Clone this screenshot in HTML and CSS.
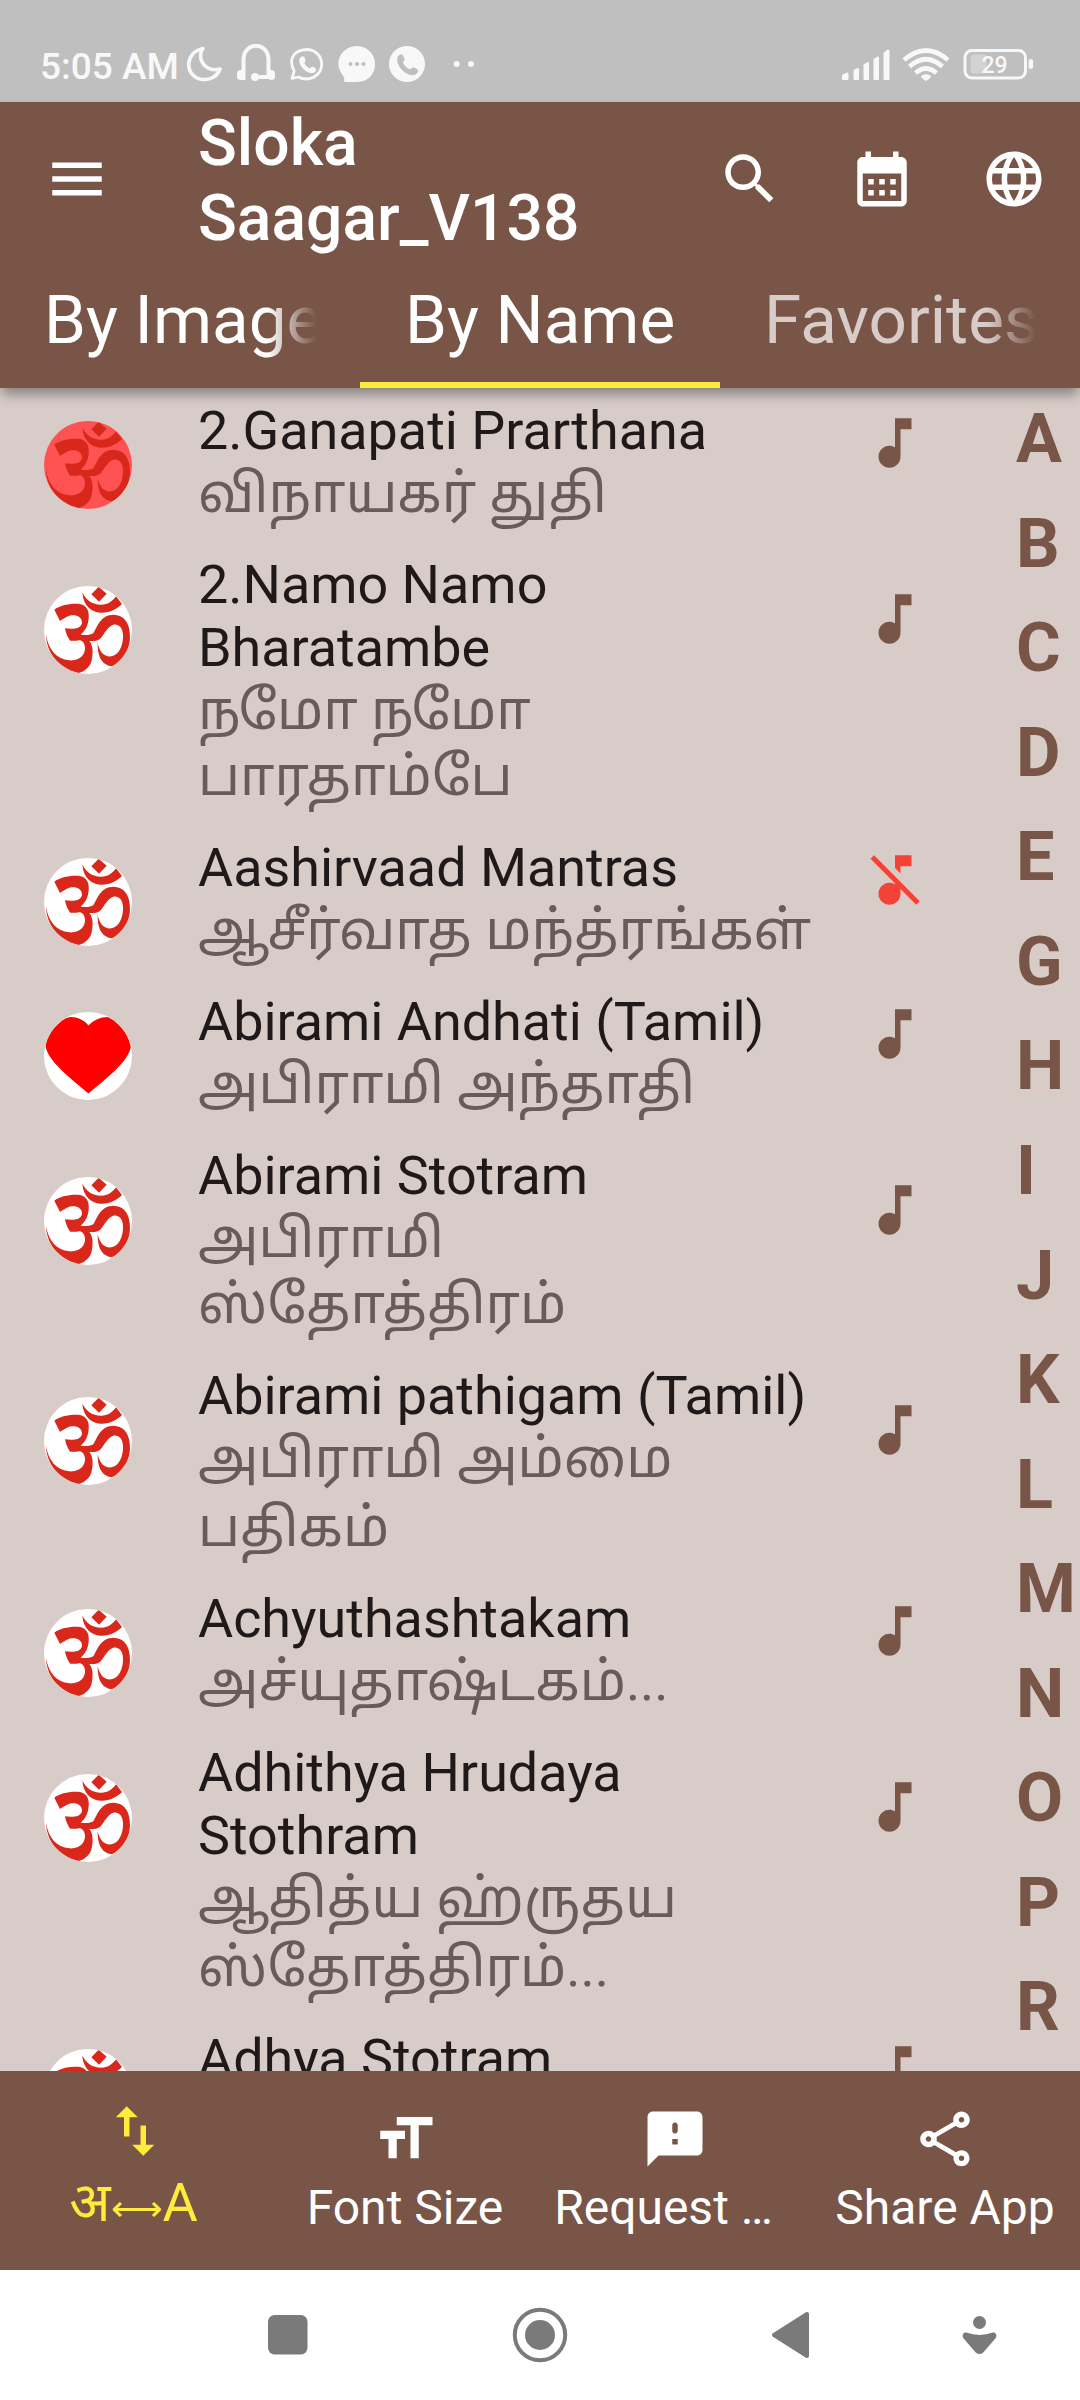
FILE: index.html
```html
<!DOCTYPE html>
<html lang="en">
<head>
<meta charset="utf-8">
<title>Sloka Saagar</title>
<link rel="stylesheet" href="styles.css">
</head>
<body>
<svg class="defs" width="0" height="0" aria-hidden="true">
  <defs>
    <clipPath id="round"><circle cx="44" cy="44" r="44"/></clipPath>
    <symbol id="om" viewBox="42 48 264 264">
      <path d="M206 50L230 71L207 95L184 73Z"/>
      <path d="M157 68C160 108 186 128 215 128C242 128 262 116 276 102L258 79C246 96 230 105 212 104C188 103 170 92 157 68Z"/>
      <path d="M73 119C90 106 120 99 150 102C172 107 178 125 176 145C174 168 166 182 152 194C168 196 180 196 190 190C204 164 214 135 250 134C290 135 301 170 300 205C298 245 275 278 246 289C222 287 202 268 203 220C210 250 225 262 245 259C268 254 280 225 279 195C278 170 262 160 248 165C232 172 224 190 212 205C206 213 190 214 178 213C190 226 190 252 184 275C178 293 160 306 145 309C100 302 50 260 48 195C56 240 80 268 118 271C150 273 166 255 165 232C163 215 152 208 142 212L120 212C112 200 107 188 105 175C125 178 153 178 156 158C156 140 138 132 118 137C108 141 98 147 90 153Z"/>
    </symbol>
    <symbol id="note" viewBox="0 0 24 24"><path d="M12 3v10.55c-.59-.34-1.27-.55-2-.55-2.21 0-4 1.79-4 4s1.79 4 4 4 4-1.79 4-4V7h4V3h-6z"/></symbol>
  </defs>
</svg>
<div class="screen">
  <div class="status">
    <span class="clock">5:05 AM</span>
    <svg class="notif" width="300" height="40" viewBox="182 44 300 40">
      <g fill="none" stroke="#f8f8f8" stroke-width="3.600" stroke-linejoin="round">
        <path d="M203 48.500C185 52 184 75 200 79C209 81 217 77 220 69C210 72 203 66 201 59C200 55 201 51 203 48.500Z"/>
        <path d="M243.500 80V60C243.500 41 268.500 41 268.500 60V77H256" stroke-width="4"/>
        <path d="M292 78.500L294.200 71C287 57 296 49.500 307.500 49.500C326 51 327 77 307 79C303 79 300 78 298.500 77Z" stroke-width="2.800"/>
      </g>
      <g fill="#f8f8f8">
        <rect x="237" y="70" width="7" height="10" rx="3.500"/><rect x="268" y="70" width="7" height="10" rx="3.500"/><circle cx="255" cy="77" r="4"/>
        <path d="M301 57c2-1.500 3.500-.5 4.500 3c.4 1.600-1.500 2-1 3.200c1.200 2.600 2.800 4 5 5c1 .4 1.800-2 3.200-1.500c3.600 1.300 4 2.300 3 4.200c-1.800 3-5.600 2.500-9 .6c-3.600-2-6.600-6-7.400-9.500c-.3-2 .2-3.900 1.700-5z"/>
        <path d="M343.500 82C345 82 344.500 78 343 75.500C332 61 343 46 357 46C381 47 381 82 357 82Z"/>
        <circle cx="407" cy="64" r="18"/>
        <circle cx="456.600" cy="64" r="3"/><circle cx="471" cy="64" r="3"/>
      </g>
      <g fill="#bfbfbf"><circle cx="350.500" cy="64" r="2"/><circle cx="357" cy="64" r="2"/><circle cx="363.500" cy="64" r="2"/>
        <path d="M399 55c2.500-2 4.500-.3 5.500 4c.5 2-2 2.400-1.200 4c1.500 3.200 3.600 5.200 6.400 6.200c1.400.5 2.300-2.400 4-1.800c4.600 1.700 5 3 3.800 5.200c-2.200 3.600-7 3-11.200.6c-4.500-2.500-8.200-7.400-9-11.700c-.4-2.500.2-5 1.700-6.500z"/></g>
    </svg>
    <svg class="sys" width="200" height="40" viewBox="838 44 200 40">
      <g fill="#f8f8f8">
        <path d="M842 76q0-2 3-2.500l1.500-.8q2-.6 2 1.300v5q0 1-1 1h-4.500q-1 0-1-1zM853.500 70l4-2q1.500-.4 1.500 1v10q0 1-1 1h-3.500q-1 0-1-1zM863.500 64.500l4-2.500q1.500-.4 1.500 1v16q0 1-1 1h-3.500q-1 0-1-1zM873.500 59l4-2.500q1.500-.4 1.500 1v21.500q0 1-1 1h-3.500q-1 0-1-1zM883.500 53l4-3.500q2-.4 2 1.500v28q0 1-1 1h-4q-1 0-1-1z"/>
        <path d="M921 76q5-3.500 10 0q.5 1.500-5 5q-5-3-5-5z"/>
        <rect x="1028.600" y="59" width="4.500" height="10" rx="2"/>
        <rect x="970.500" y="54.500" width="16" height="19" rx="3" opacity=".35"/>
      </g>
      <g fill="none" stroke="#f8f8f8" stroke-width="4.600">
        <path d="M904 60Q926 41 948 60"/><path d="M909.500 66.500Q926 52 942.500 66.500"/><path d="M915.500 73Q926 64 936.500 73"/>
        <rect x="965" y="50.500" width="60.500" height="27.500" rx="7" stroke-width="3"/>
      </g>
      <text class="batt" x="994.500" y="73" text-anchor="middle">29</text>
    </svg>
  </div>

  <header class="appbar">
    <div class="toolbar">
      <svg class="icon menu" viewBox="0 0 24 24"><path d="M3 18h18v-2H3v2zm0-5h18v-2H3v2zm0-7v2h18V6H3z"/></svg>
      <h1 class="title">Sloka<br>Saagar_V138</h1>
      <div class="actions">
        <svg class="icon" viewBox="0 0 24 24"><path d="M15.500 14h-.79l-.28-.27C15.410 12.590 16 11.110 16 9.500 16 5.910 13.090 3 9.500 3S3 5.910 3 9.500 5.910 16 9.500 16c1.610 0 3.090-.59 4.230-1.570l.27.28v.79l5 4.990L20.490 19l-4.990-5zm-6 0C7.010 14 5 11.990 5 9.500S7.010 5 9.500 5 14 7.010 14 9.500 11.990 14 9.500 14z"/></svg>
        <svg class="icon" viewBox="0 0 24 24"><path d="M19 4h-1V2h-2v2H8V2H6v2H5c-1.110 0-1.990.9-1.990 2L3 20c0 1.100.89 2 2 2h14c1.100 0 2-.9 2-2V6c0-1.100-.9-2-2-2zm0 16H5V10h14v10zM9 14H7v-2h2v2zm4 0h-2v-2h2v2zm4 0h-2v-2h2v2zm-8 4H7v-2h2v2zm4 0h-2v-2h2v2zm4 0h-2v-2h2v2z"/></svg>
        <svg class="icon" viewBox="0 0 24 24"><path d="M11.990 2C6.470 2 2 6.480 2 12s4.470 10 9.990 10C17.520 22 22 17.520 22 12S17.520 2 11.990 2zm6.930 6h-2.950c-.32-1.250-.78-2.450-1.380-3.560 1.840.63 3.370 1.910 4.330 3.560zM12 4.040c.83 1.200 1.480 2.530 1.910 3.960h-3.820c.43-1.430 1.080-2.760 1.910-3.960zM4.260 14C4.100 13.360 4 12.690 4 12s.1-1.360.26-2h3.380c-.08.66-.14 1.320-.14 2 0 .68.06 1.340.14 2H4.260zm.82 2h2.950c.32 1.250.78 2.450 1.380 3.560-1.840-.63-3.370-1.900-4.330-3.560zm2.950-8H5.080c.96-1.660 2.490-2.930 4.330-3.560C8.810 5.550 8.350 6.750 8.030 8zM12 19.960c-.83-1.200-1.480-2.530-1.910-3.960h3.820c-.43 1.430-1.080 2.760-1.910 3.960zM14.340 14H9.660c-.09-.66-.16-1.320-.16-2 0-.68.07-1.350.16-2h4.680c.09.65.16 1.320.16 2 0 .68-.07 1.340-.16 2zm.25 5.560c.6-1.110 1.060-2.310 1.380-3.560h2.950c-.96 1.650-2.490 2.930-4.330 3.560zM16.360 14c.08-.66.14-1.320.14-2 0-.68-.06-1.340-.14-2h3.380c.16.64.26 1.310.26 2s-.1 1.360-.26 2h-3.380z"/></svg>
      </div>
    </div>
    <nav class="tabs">
      <div class="tab"><span class="fade">By Images</span></div>
      <div class="tab active"><span>By Name</span></div>
      <div class="tab dim"><span class="fade">Favorites</span></div>
    </nav>
  </header>

  <main class="body">
    <div class="list">
      <div class="row">
        <svg class="avatar hot" viewBox="0 0 88 88"><use href="#om" width="88" height="88"/></svg>
        <div class="text"><p class="en">2.Ganapati Prarthana</p><p class="ta">விநாயகர் துதி</p></div>
        <svg class="note" viewBox="0 0 24 24"><use href="#note"/></svg>
      </div>
      <div class="row tall">
        <svg class="avatar" viewBox="0 0 88 88"><use href="#om" width="88" height="88"/></svg>
        <div class="text"><p class="en">2.Namo Namo<br>Bharatambe</p><p class="ta">நமோ நமோ<br>பாரதாம்பே</p></div>
        <svg class="note" viewBox="0 0 24 24"><use href="#note"/></svg>
      </div>
      <div class="row">
        <svg class="avatar" viewBox="0 0 88 88"><use href="#om" width="88" height="88"/></svg>
        <div class="text"><p class="en">Aashirvaad Mantras</p><p class="ta">ஆசீர்வாத மந்த்ரங்கள்</p></div>
        <svg class="note off" viewBox="0 0 24 24"><path d="M12 3h6v4h-4v2.600l-2-2z M10 13c-2.210 0-4 1.790-4 4s1.790 4 4 4 4-1.790 4-4v-2.800l-1.200-1.200-.8.550c-.59-.34-1.270-.55-2-.55z"/><path d="M4.400 3L3.100 4.300L19.700 21L21 19.700Z"/></svg>
      </div>
      <div class="row">
        <svg class="avatar" viewBox="0 0 88 88"><path clip-path="url(#round)" fill="#f00" d="M44.500 13.500C50 8 56 5 64 5C78 10 87 22 87 34C85 50 60 68 44.500 81.500C29 68 4 50 1.500 34C2 22 12 8 26 5C34 5 40 8 44.500 13.500Z"/></svg>
        <div class="text"><p class="en">Abirami Andhati (Tamil)</p><p class="ta">அபிராமி அந்தாதி</p></div>
        <svg class="note" viewBox="0 0 24 24"><use href="#note"/></svg>
      </div>
      <div class="row tall">
        <svg class="avatar" viewBox="0 0 88 88"><use href="#om" width="88" height="88"/></svg>
        <div class="text"><p class="en">Abirami Stotram</p><p class="ta">அபிராமி<br>ஸ்தோத்திரம்</p></div>
        <svg class="note" viewBox="0 0 24 24"><use href="#note"/></svg>
      </div>
      <div class="row tall">
        <svg class="avatar" viewBox="0 0 88 88"><use href="#om" width="88" height="88"/></svg>
        <div class="text"><p class="en">Abirami pathigam (Tamil)</p><p class="ta loose">அபிராமி அம்மை<br>பதிகம்</p></div>
        <svg class="note" viewBox="0 0 24 24"><use href="#note"/></svg>
      </div>
      <div class="row">
        <svg class="avatar" viewBox="0 0 88 88"><use href="#om" width="88" height="88"/></svg>
        <div class="text"><p class="en">Achyuthashtakam</p><p class="ta">அச்யுதாஷ்டகம்...</p></div>
        <svg class="note" viewBox="0 0 24 24"><use href="#note"/></svg>
      </div>
      <div class="row tall">
        <svg class="avatar" viewBox="0 0 88 88"><use href="#om" width="88" height="88"/></svg>
        <div class="text"><p class="en">Adhithya Hrudaya<br>Stothram</p><p class="ta loose">ஆதித்ய ஹ்ருதய<br>ஸ்தோத்திரம்...</p></div>
        <svg class="note" viewBox="0 0 24 24"><use href="#note"/></svg>
      </div>
      <div class="row">
        <svg class="avatar" viewBox="0 0 88 88"><use href="#om" width="88" height="88"/></svg>
        <div class="text"><p class="en">Adhya Stotram</p></div>
        <svg class="note" viewBox="0 0 24 24"><use href="#note"/></svg>
      </div>
    </div>
    <div class="index">
      <span>A</span><span>B</span><span>C</span><span>D</span><span>E</span><span>G</span><span>H</span><span>I</span><span>J</span><span>K</span><span>L</span><span>M</span><span>N</span><span>O</span><span>P</span><span>R</span>
    </div>
  </main>

  <nav class="bottom">
    <div class="item selected"><svg class="icon" viewBox="0 0 24 24"><path d="M9 3L5 6.990h3V14h2V6.990h3L9 3zm7 14.010V10h-2v7.010h-3L15 21l4-3.990h-3z"/></svg><span class="label">अ<span class="arrow">⟷</span>A</span></div>
    <div class="item"><svg class="icon" viewBox="0 0 24 24"><path d="M9 4v3h5v12h3V7h5V4H9zm-6 8h3v7h3v-7h3V9H3v3z"/></svg><span class="label">Font Size</span></div>
    <div class="item req"><svg class="icon" viewBox="0 0 24 24"><path d="M20 2H4c-1.100 0-1.990.9-1.990 2L2 22l4-4h14c1.100 0 2-.9 2-2V4c0-1.100-.9-2-2-2zm-7 12h-2v-2h2v2zm-1-4c-.55 0-1-.45-1-1V7c0-.55.45-1 1-1s1 .45 1 1v2c0 .55-.45 1-1 1z"/></svg><span class="label">Request …</span></div>
    <div class="item"><svg class="icon" viewBox="0 0 24 24"><path d="M18 16.080c-.76 0-1.440.3-1.960.77L8.910 12.700c.05-.23.09-.46.09-.7s-.04-.47-.09-.7l7.050-4.110c.54.5 1.250.81 2.040.81 1.660 0 3-1.340 3-3s-1.340-3-3-3-3 1.340-3 3c0 .24.04.47.09.7L8.040 9.810C7.500 9.310 6.790 9 6 9c-1.660 0-3 1.340-3 3s1.340 3 3 3c.79 0 1.500-.31 2.040-.81l7.120 4.160c-.05.21-.08.43-.08.65 0 1.610 1.310 2.920 2.920 2.920s2.920-1.310 2.920-2.920c0-1.610-1.310-2.920-2.920-2.920zM18 4c.55 0 1 .45 1 1s-.45 1-1 1-1-.45-1-1 .45-1 1-1zM6 13c-.55 0-1-.45-1-1s.45-1 1-1 1 .45 1 1-.45 1-1 1zm12 7.020c-.55 0-1-.45-1-1s.45-1 1-1 1 .45 1 1-.45 1-1 1z"/></svg><span class="label">Share App</span></div>
  </nav>

  <div class="sysnav">
    <svg width="1080" height="130" viewBox="0 2270 1080 130" fill="#7a7a7a">
      <rect x="268" y="2315" width="39.500" height="39.500" rx="6.500"/>
      <circle cx="540" cy="2335" r="25.200" fill="none" stroke="#7a7a7a" stroke-width="4"/><circle cx="540" cy="2335" r="15"/>
      <path d="M774 2335L807 2314V2356Z" stroke="#7a7a7a" stroke-width="4" stroke-linejoin="round"/>
      <circle cx="979.500" cy="2322.500" r="6.500"/>
      <path d="M965.500 2334.500Q979.500 2339.500 993.500 2334.500Q995 2335 994 2337L982 2351Q979.500 2353 977 2351L965 2337Q964 2335 965.500 2334.500Z" stroke="#7a7a7a" stroke-width="4" stroke-linejoin="round"/>
    </svg>
  </div>
</div>
</body>
</html>
```
FILE: styles.css
```css
* { box-sizing: border-box; margin: 0; padding: 0; }
body { width: 1080px; height: 2400px; overflow: hidden; background: #d7ccc8; font-family: Roboto, "Noto Sans Tamil", "Noto Sans", sans-serif; }
svg { display: block; flex: none; }
.defs { position: absolute; }
.screen { display: flex; flex-direction: column; width: 1080px; height: 2400px; }

.status { flex: none; height: 102px; display: flex; align-items: flex-start; padding: 44px 42px 0 40px; background: #bfbfbf; }
.clock { width: 142px; font-size: 37px; font-weight: 500; line-height: 45px; color: #f8f8f8; white-space: nowrap; }
.sys { margin-left: auto; }
.batt { font-size: 23px; font-weight: 500; fill: #f8f8f8; }

.appbar { flex: none; height: 286px; background: #795548; color: #fff; box-shadow: 0 8px 12px -2px rgba(0, 0, 0, .38); z-index: 1; }
.toolbar { height: 154px; display: flex; align-items: center; }
.icon { width: 66px; height: 66px; fill: currentColor; }
.menu { margin: 0 88px 0 44px; }
.title { flex: 1; font-size: 64.2px; font-weight: 500; line-height: 75px; padding-top: 4px; }
.actions { display: flex; gap: 66px; padding-right: 33px; }
.tabs { height: 132px; display: flex; }
.tab { width: 360px; padding: 24px 44px 0; border-bottom: 6px solid transparent; font-size: 67.4px; line-height: 80px; white-space: nowrap; }
.tab span { display: block; overflow: hidden; text-align: left; }
.tab.active { border-bottom-color: #ffeb3b; padding-left: 45px; }
.tab.dim { color: #d7ccc8; }
.fade { -webkit-mask-image: linear-gradient(90deg, #000 82%, transparent); mask-image: linear-gradient(90deg, #000 82%, transparent); }

.body { flex: none; height: 1683px; display: flex; overflow: hidden; }
.list { width: 1016px; }
.row { display: flex; align-items: flex-start; padding: 11px 0 13px 44px; }
.avatar { width: 88px; height: 88px; margin-top: 22px; border-radius: 50%; background: #fff; fill: #d9281b; }
.avatar.hot { background: #ff5252; }
.text { width: 664px; margin-left: 66px; }
.en { font-size: 53.9px; line-height: 63px; color: #1f1a19; white-space: nowrap; }
.ta { margin-top: -1px; padding-bottom: 2px; font-size: 53.9px; line-height: 66px; color: #675c59; white-space: nowrap; }
.ta.loose { margin-top: -2px; padding-bottom: 1px; line-height: 68.500px; }
.note { width: 66px; height: 66px; margin-top: 11px; fill: #795548; }
.note.off { fill: #f44336; }
.tall .avatar, .tall .note { margin-top: 33px; }
.index { width: 64px; margin-top: -1px; display: flex; flex-direction: column; font-size: 68.400px; font-weight: 700; line-height: 104.560px; color: #795548; }

.bottom { flex: none; height: 199px; display: flex; background: #795548; color: #fff; }
.item { width: 270px; display: flex; flex-direction: column; align-items: center; padding-top: 35px; font-size: 48px; line-height: 55px; white-space: nowrap; }
.label { margin-top: 8px; }
.req .label { margin-right: 23px; }
.selected { color: #ffeb3b; padding-top: 27px; font-size: 54px; line-height: 60px; font-family: Roboto, "Noto Sans Devanagari", "Noto Sans", sans-serif; }
.selected .label { margin: 9px 3px 0 0; }
.arrow { font-size: 36px; line-height: 1; }
.sysnav { flex: none; height: 130px; background: #fff; }
```
